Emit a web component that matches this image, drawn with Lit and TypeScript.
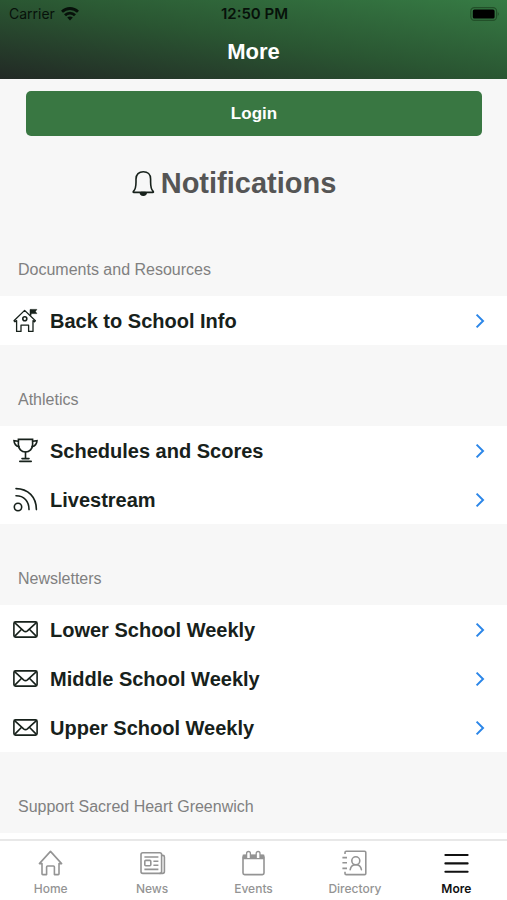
import { LitElement, html, css, svg, nothing } from "lit";
import { customElement, property } from "lit/decorators.js";

const icons: Record<string, unknown> = {
  school: svg`
    <path d="M1 12.8 11.6 2.4 22.4 12.8 21.4 13.8 20 12.6V23.4H15.6V17.2H8V23.4H3.6V12.6L2 13.8Z" stroke-linejoin="round" stroke-width="1.3"/>
    <path d="M17.6 7.6V1.6"/>
    <path d="M17.4 1.4h6.4l-1.4 2 1.4 2.2h-6.4z" fill="currentColor" stroke-width="0.6"/>
    <circle cx="11.8" cy="10.8" r="2"/>`,
  trophy: svg`
    <path d="M5.4 1.4H19.6V6.4C19.6 10.8 16.6 14 12.5 14S5.4 10.8 5.4 6.4Z"/>
    <path d="M5.4 3.2 1 2.6C1.2 6 3 8 6 8.6M19.6 3.2 24 2.6C23.8 6 22 8 19 8.6M12.5 14V20.4M9 20.6H16M6.8 23.4H18.2" stroke-linecap="round"/>`,
  feed: svg`
    <circle cx="5" cy="20" r="3.7"/>
    <path d="M3 1.6C15 1.6 23.4 10 23.4 22.6M3 8.8C11 8.8 16 14 16 22.6" stroke-linecap="round"/>`,
  mail: svg`
    <rect x="0.9" y="4.9" width="23.2" height="15.2" rx="1.6"/>
    <path d="M1.6 5.6 10.6 13.8C11.8 14.8 13.2 14.8 14.4 13.8L23.4 5.6M1.6 19.4 8.6 12.2M23.4 19.4 16.4 12.2"/>`,
  home: svg`
    <path d="M1.4 13.6 12.5 1.4 23.6 13.6H21V23.8Q21 24.6 20.2 24.6H16.4V17Q16.4 16 15.4 16H9.6Q8.6 16 8.6 17V24.6H4.8Q4 24.6 4 23.8V13.6Z" stroke-linejoin="round"/>`,
  news: svg`
    <rect x="1" y="2.8" width="20.6" height="20.6" rx="1.8"/>
    <path d="M21.6 5.4H22.8Q24.4 5.4 24.4 7V21.6Q24.4 23.4 22.6 23.4H19.6M4.4 7H18.4M13.4 11.2H18.4M13.4 15.2H18.4M4.4 19.4H18.4"/>
    <rect x="4.8" y="10.4" width="6" height="5.4" rx="1"/>`,
  events: svg`
    <rect x="2" y="5.6" width="21" height="19" rx="1.6"/>
    <path d="M2.6 5.4H22.4V8.4H2.6Z" fill="currentColor"/>
    <path d="M5.6 8V3.4a1.9 1.9 0 0 1 3.8 0V8M15.2 8V3.4a1.9 1.9 0 0 1 3.8 0V8" fill="#fff" stroke-width="1.3"/>`,
  directory: svg`
    <path d="M3 4V2.4Q3 1.2 4.2 1.2H22.6Q23.8 1.2 23.8 2.4V23.4Q23.8 24.6 22.6 24.6H4.2Q3 24.6 3 23.4V21.8M0.4 7.6H5M0.4 12.8H5M0.4 18.4H5"/>
    <circle cx="13.8" cy="10.8" r="4"/>
    <path d="M8.2 19.6C8.8 16.6 10.8 14.8 13.8 14.8S18.8 16.6 19.4 19.6" stroke-linecap="round"/>`,
  more: svg`<path d="M1.4 5H23.6M1.4 13.4H23.6M1.4 21.8H23.6" stroke-width="2.1" stroke-linecap="round"/>`,
  bell: svg`
    <path d="M2.4 21.4C4.8 19.4 5 17.2 5 12V9C5 4.4 8 1.8 12.3 1.8S19.6 4.4 19.6 9V12C19.6 17.2 19.8 19.4 22.2 21.4Q22.8 22.4 21.8 22.4H2.8Q1.8 22.4 2.4 21.4Z" stroke-linejoin="round"/>
    <path d="M9.4 22.6A2.9 2.6 0 0 0 15.2 22.6M10.8 22.6H13.8V24.2H10.8Z"/>`,
};

@customElement("line-icon")
class LineIcon extends LitElement {
  @property() name = "";

  static styles = css`
    :host { display: block; flex: none; width: 25px; height: 26px; }
    svg { display: block; width: 100%; height: 100%; overflow: visible; fill: none; stroke: currentColor; stroke-width: 1.6; }
  `;

  render() {
    return html`<svg viewBox="0 0 25 26" aria-hidden="true">${icons[this.name] ?? nothing}</svg>`;
  }
}

interface Link { icon: string; label: string; }
interface Section { title: string; links: Link[]; }

const sections: Section[] = [
  { title: "Documents and Resources", links: [{ icon: "school", label: "Back to School Info" }] },
  { title: "Athletics", links: [
    { icon: "trophy", label: "Schedules and Scores" },
    { icon: "feed", label: "Livestream" },
  ] },
  { title: "Newsletters", links: [
    { icon: "mail", label: "Lower School Weekly" },
    { icon: "mail", label: "Middle School Weekly" },
    { icon: "mail", label: "Upper School Weekly" },
  ] },
  { title: "Support Sacred Heart Greenwich", links: [] },
];

const tabs: Link[] = [
  { icon: "home", label: "Home" },
  { icon: "news", label: "News" },
  { icon: "events", label: "Events" },
  { icon: "directory", label: "Directory" },
  { icon: "more", label: "More" },
];

@customElement("app-root")
class AppRoot extends LitElement {
  static styles = css`
    * { box-sizing: border-box; }
    :host {
      display: flex; flex-direction: column; height: 100vh;
      background: #f7f7f7; color: #17211b;
      font-family: "Liberation Sans", Arial, sans-serif;
    }
    a { color: inherit; text-decoration: none; }
    .header { flex: none; background: linear-gradient(to top right, #222925, #2a5632 50%, #367b44); }
    .status {
      display: grid; grid-template-columns: 1fr auto 1fr; align-items: center;
      height: 28px; padding: 0 7px 0 9px; color: #07110a;
      font: 400 14px/20px Inter, sans-serif;
    }
    .carrier { display: flex; align-items: center; gap: 6px; }
    .time { font-size: 15px; font-weight: 600; }
    .battery { justify-self: end; display: block; }
    .wifi { display: block; }
    .title { margin: 0; padding: 8px 0 11px; color: #fff; text-align: center; font-size: 22px; line-height: 32px; font-weight: 700; }
    .content { flex: 1; min-height: 0; overflow-y: auto; scrollbar-width: none; display: flex; flex-direction: column; }
    .account { flex: none; padding: 12px 25px 0 26px; }
    .login {
      display: block; width: 100%; height: 45px; padding: 0; border: 0; border-radius: 5px;
      background: #397742; color: #fff; font: 700 17px/24px "Liberation Sans", Arial, sans-serif;
    }
    .notifications {
      flex: none; display: flex; align-items: center; justify-content: center; gap: 5px;
      margin: 0; padding: 29px 40px 14px 0; color: #555; font-size: 29px; line-height: 36px;
    }
    .notifications line-icon { color: #17211b; }
    .section { flex: none; }
    .section:last-child { flex: 1 0 auto; display: flex; flex-direction: column; }
    .heading { margin: 0; padding: 44px 18px 15px; color: #808080; font-size: 16px; line-height: 22px; font-weight: 400; }
    .list { flex: 1; margin: 0; padding: 0; list-style: none; background: #fff; }
    .link { display: flex; align-items: center; gap: 12px; height: 49px; padding: 0 22px 0 13px; font-size: 20px; line-height: 28px; font-weight: 700; }
    .label { flex: 1; }
    .chevron { flex: none; display: block; }
    .tabs { flex: none; display: flex; height: 61px; border-top: 2px solid #e8e8e8; background: #fff; font: 500 12px/16px Inter, sans-serif; }
    .tab { flex: 1; display: flex; flex-direction: column; align-items: center; gap: 5px; padding-top: 9px; color: #949494; }
    .tab.active { color: #111; font-weight: 600; }
  `;

  render() {
    return html`
      <header class="header">
        <div class="status">
          <span class="carrier">Carrier
            <svg class="wifi" width="18" height="14" viewBox="0 0 18 14" fill="none" stroke="currentColor" stroke-width="2.8" aria-hidden="true">
              <path d="M1 4.8C5.6 0.4 12.4 0.4 17 4.8M4 8.2C6.8 5.4 11.2 5.4 14 8.2"/>
              <path d="M9 13.4 6.2 10.6C7.8 9 10.2 9 11.8 10.6Z" fill="currentColor" stroke="none"/>
            </svg>
          </span>
          <span class="time">12:50 PM</span>
          <svg class="battery" width="30" height="14" viewBox="0 0 30 14" aria-hidden="true">
            <rect x="0.8" y="0.6" width="25.8" height="12.8" rx="3.6" fill="none" stroke="#225029" stroke-width="1.2"/>
            <rect x="2.8" y="2.4" width="21.8" height="9.2" rx="1.6" fill="#000"/>
            <path d="M27.8 5Q30 7 27.8 9Z" fill="#225029"/>
          </svg>
        </div>
        <h1 class="title">More</h1>
      </header>
      <main class="content">
        <div class="account"><button class="login" type="button">Login</button></div>
        <h2 class="notifications"><line-icon name="bell"></line-icon>Notifications</h2>
        ${sections.map((s) => html`
          <section class="section">
            <h3 class="heading">${s.title}</h3>
            <ul class="list">
              ${s.links.map((l) => html`
                <li>
                  <a class="link" href="#">
                    <line-icon name=${l.icon}></line-icon>
                    <span class="label">${l.label}</span>
                    <svg class="chevron" width="10" height="16" viewBox="0 0 10 16" fill="none" stroke="#2b86e8" stroke-width="2" aria-hidden="true">
                      <path d="M1.6 1.6 8 8 1.6 14.4"/>
                    </svg>
                  </a>
                </li>`)}
            </ul>
          </section>`)}
      </main>
      <nav class="tabs">
        ${tabs.map((t) => html`
          <a class="tab ${t.icon === "more" ? "active" : ""}" href="#"><line-icon name=${t.icon}></line-icon>${t.label}</a>`)}
      </nav>
    `;
  }
}
